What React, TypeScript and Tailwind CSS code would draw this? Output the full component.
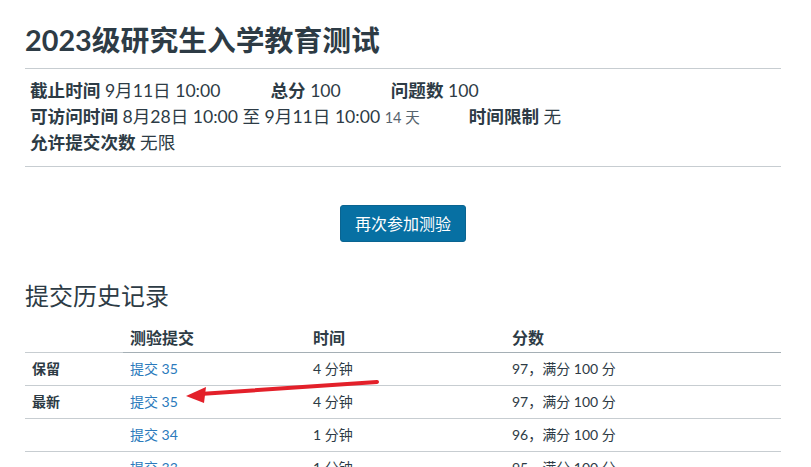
import React from "react";

const font = { fontFamily: "Lato, 'Noto Sans CJK SC', sans-serif" };

type Row = { label: string; sub: string; time: string; score: string };

const rows: Row[] = [
  { label: "保留", sub: "提交 35", time: "4 分钟", score: "97，满分 100 分" },
  { label: "最新", sub: "提交 35", time: "4 分钟", score: "97，满分 100 分" },
  { label: "", sub: "提交 34", time: "1 分钟", score: "96，满分 100 分" },
  { label: "", sub: "提交 33", time: "1 分钟", score: "95，满分 100 分" },
];

export default function App() {
  return (
    <div className="relative w-[811px] h-[467px] overflow-hidden bg-white text-[#2d3b45]" style={font}>
      <div className="w-[756px] ml-[25px]">
        <h1 className="pt-[22px] pb-[10px] text-[28.8px] leading-[36px] font-bold border-b border-[#c7cdd1]">
          2023级研究生入学教育测试
        </h1>
        <div className="pl-[5px] pt-[9px] pb-[10px] border-b border-[#c7cdd1] text-[17.6px]">
          <div className="flex h-[26px] leading-[26px] gap-[50px]">
            <div>
              <span className="font-bold">截止时间</span> 9月11日 10:00
            </div>
            <div>
              <span className="font-bold">总分</span> 100
            </div>
            <div>
              <span className="font-bold">问题数</span> 100
            </div>
          </div>
          <div className="flex h-[26px] leading-[26px] gap-[49px]">
            <div>
              <span className="font-bold">可访问时间</span> 8月28日 10:00 至 9月11日 10:00{" "}
              <span className="text-[14.5px] text-[#56636d]">14 天</span>
            </div>
            <div>
              <span className="font-bold">时间限制</span> 无
            </div>
          </div>
          <div className="flex h-[26px] leading-[26px]">
            <div>
              <span className="font-bold">允许提交次数</span> 无限
            </div>
          </div>
        </div>
        <div className="flex justify-center mt-[38px]">
          <button className="w-[126px] h-[37px] rounded-[3px] bg-[#0770a3] border border-[#0a6491] text-white text-[16px] leading-[35px]">
            再次参加测验
          </button>
        </div>
        <h2 className="mt-[39px] text-[24px] leading-[30px] font-normal">提交历史记录</h2>
        <div className="grid grid-cols-[98px_183px_199px_1fr] text-[16px]">
          <div className="pt-[15px] pb-[3px] leading-[23px] border-b border-[#c7cdd1]"></div>
          <div className="pt-[15px] pb-[3px] leading-[23px] pl-[7px] font-semibold border-b border-[#a5afb5]">测验提交</div>
          <div className="pt-[15px] pb-[3px] leading-[23px] pl-[7px] font-semibold border-b border-[#a5afb5]">时间</div>
          <div className="pt-[15px] pb-[3px] leading-[23px] pl-[7px] font-semibold border-b border-[#a5afb5]">分数</div>
          {rows.map((r, i) => (
            <React.Fragment key={i}>
              <div className="h-[33px] leading-[32px] pl-[7px] text-[14px] font-bold border-b border-[#c7cdd1]">{r.label}</div>
              <div className="h-[33px] leading-[32px] pl-[7px] text-[14px] text-[#2b7abc] border-b border-[#c7cdd1]">{r.sub}</div>
              <div className="h-[33px] leading-[32px] pl-[7px] text-[14px] border-b border-[#c7cdd1]">{r.time}</div>
              <div className="h-[33px] leading-[32px] pl-[7px] text-[14px] border-b border-[#c7cdd1]">{r.score}</div>
            </React.Fragment>
          ))}
        </div>
      </div>
      <svg className="absolute left-0 top-0 pointer-events-none" width="811" height="467">
        <line x1="377" y1="382" x2="200" y2="394" stroke="#e3202a" strokeWidth="4" strokeLinecap="round" />
        <polygon points="186,396 206,387 204,403" fill="#e3202a" />
      </svg>
    </div>
  );
}
